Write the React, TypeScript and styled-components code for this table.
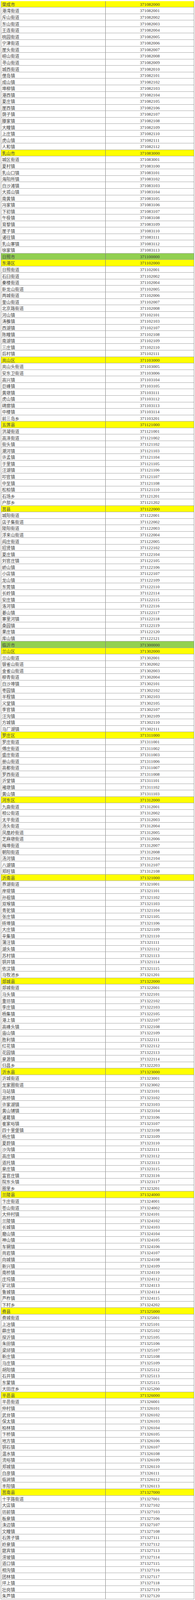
import React from 'react'
import styled, { createGlobalStyle } from 'styled-components'

type Level = 'city' | 'county' | 'town'

interface Place {
  name: string
  code: string
  level: Level
}

// name code, one per line, in the order of the sheet
const raw = `
荣成市 371082000
港湾街道 371082001
斥山街道 371082002
东山街道 371082003
王连街道 371082004
桃园街道 371082005
宁津街道 371082006
崖头街道 371082007
崂山街道 371082008
寻山街道 371082009
城西街道 371082010
俚岛镇 371082101
成山镇 371082102
埠柳镇 371082103
港西镇 371082104
夏庄镇 371082105
崖西镇 371082106
荫子镇 371082107
滕家镇 371082108
大疃镇 371082109
上庄镇 371082110
虎山镇 371082111
人和镇 371082112
乳山市 371083000
城区街道 371083001
夏村镇 371083100
乳山口镇 371083101
海阳所镇 371083102
白沙滩镇 371083103
大孤山镇 371083104
南黄镇 371083105
冯家镇 371083106
下初镇 371083107
午极镇 371083108
育黎镇 371083109
崖子镇 371083110
诸往镇 371083111
乳山寨镇 371083112
徐家镇 371083113
日照市 371100000
东港区 371102000
日照街道 371102001
石臼街道 371102002
秦楼街道 371102004
卧龙山街道 371102005
两城街道 371102006
奎山街道 371102007
北京路街道 371102008
河山镇 371102101
涛雒镇 371102103
西湖镇 371102107
陈疃镇 371102108
南湖镇 371102109
三庄镇 371102110
后村镇 371102111
岚山区 371103000
岚山头街道 371103005
安东卫街道 371103006
高兴镇 371103104
巨峰镇 371103105
黄墩镇 371103111
虎山镇 371103112
碑廓镇 371103113
中楼镇 371103114
前三岛乡 371103201
五莲县 371121000
洪凝街道 371121001
高泽街道 371121002
街头镇 371121102
潮河镇 371121103
许孟镇 371121104
于里镇 371121105
汪湖镇 371121106
叩官镇 371121107
中至镇 371121108
松柏镇 371121110
石场乡 371121201
户部乡 371121202
莒县 371122000
城阳街道 371122001
店子集街道 371122002
陵阳街道 371122003
浮来山街道 371122004
阎庄街道 371122005
招贤镇 371122102
夏庄镇 371122104
刘官庄镇 371122105
峤山镇 371122106
小店镇 371122107
龙山镇 371122109
东莞镇 371122110
长岭镇 371122114
安庄镇 371122115
洛河镇 371122116
碁山镇 371122117
寨里河镇 371122118
桑园镇 371122119
果庄镇 371122120
库山镇 371122121
临沂市 371300000
兰山区 371302000
兰山街道 371302001
银雀山街道 371302002
金雀山街道 371302003
柳青街道 371302004
白沙埠镇 371302101
枣园镇 371302102
半程镇 371302103
义堂镇 371302105
李官镇 371302107
汪沟镇 371302109
方城镇 371302110
马厂湖镇 371302111
罗庄区 371311000
罗庄街道 371311001
傅庄街道 371311002
盛庄街道 371311003
册山街道 371311006
高都街道 371311007
罗西街道 371311008
沂堂镇 371311101
褚墩镇 371311102
黄山镇 371311103
河东区 371312000
九曲街道 371312001
相公街道 371312002
太平街道 371312003
汤头街道 371312004
凤凰岭街道 371312005
芝麻墩街道 371312006
梅埠街道 371312007
朝阳街道 371312008
汤河镇 371312104
八湖镇 371312107
郑旺镇 371312108
沂南县 371321000
界湖街道 371321001
岸堤镇 371321101
孙祖镇 371321102
双堠镇 371321103
青驼镇 371321104
张庄镇 371321105
砖埠镇 371321106
大庄镇 371321109
辛集镇 371321110
蒲汪镇 371321111
湖头镇 371321112
苏村镇 371321113
铜井镇 371321114
依汶镇 371321115
马牧池乡 371321201
郯城县 371322000
郯城街道 371322001
马头镇 371322101
重坊镇 371322102
李庄镇 371322103
杨集镇 371322105
港上镇 371322107
高峰头镇 371322108
庙山镇 371322109
胜利镇 371322111
红花镇 371322112
花园镇 371322113
泉源镇 371322114
归昌乡 371322203
沂水县 371323000
沂城街道 371323001
龙家圈街道 371323002
马站镇 371323101
高桥镇 371323102
许家湖镇 371323103
黄山铺镇 371323104
诸葛镇 371323106
崔家峪镇 371323107
四十里堡镇 371323108
杨庄镇 371323109
夏蔚镇 371323110
沙沟镇 371323111
高庄镇 371323112
道托镇 371323113
泉庄镇 371323115
富官庄镇 371323116
院东头镇 371323117
圈里乡 371323201
兰陵县 371324000
卞庄街道 371324001
苍山街道 371324002
大仲村镇 371324101
兰陵镇 371324102
长城镇 371324103
磨山镇 371324104
神山镇 371324105
车辋镇 371324106
尚岩镇 371324107
向城镇 371324108
新兴镇 371324109
南桥镇 371324110
庄坞镇 371324112
矿坑镇 371324113
鲁城镇 371324114
芦柞镇 371324115
下村乡 371324202
费县 371325000
费城街道 371325001
上冶镇 371325101
薛庄镇 371325102
探沂镇 371325105
朱田镇 371325106
梁邱镇 371325107
新庄镇 371325108
马庄镇 371325109
胡阳镇 371325112
石井镇 371325113
东蒙镇 371325115
大田庄乡 371325200
平邑县 371326000
平邑街道 371326001
仲村镇 371326101
武台镇 371326102
保太镇 371326103
柏林镇 371326104
卞桥镇 371326105
地方镇 371326106
铜石镇 371326107
温水镇 371326108
流峪镇 371326109
郑城镇 371326110
白彦镇 371326111
临涧镇 371326112
丰阳镇 371326113
莒南县 371327000
十字路街道 371327001
大店镇 371327102
坊前镇 371327103
板泉镇 371327106
洙边镇 371327107
文疃镇 371327108
石莲子镇 371327111
岭泉镇 371327112
筵宾镇 371327113
涝坡镇 371327114
道口镇 371327115
相沟镇 371327116
团林镇 371327117
坪上镇 371327118
壮岗镇 371327119
朱芦镇 371327120
`

const places: Place[] = raw
  .trim()
  .split('\n')
  .map((line) => {
    const [name, code] = line.trim().split(' ')
    let level: Level = 'town'
    if (code.endsWith('00000')) level = 'city'
    else if (code.endsWith('000')) level = 'county'
    return { name, code, level }
  })

const fills: Record<Level, string> = {
  city: '#92d050',
  county: '#ffff00',
  town: '#ffffff',
}

const GlobalStyle = createGlobalStyle`
  html, body {
    margin: 0;
    padding: 0;
    background: #fff;
    overflow: hidden;
  }
`

// sizes are in vw/vh so the sheet keeps its proportions in the window
const Page = styled.div`
  width: 100vw;
  height: 100vh;
  padding: 0.065vh 0.4vw 0.04vh 0.4vw;
  box-sizing: border-box;
`

const Sheet = styled.div`
  display: flex;
  flex-direction: column;
  width: 100%;
  height: 100%;
  border-left: 1px solid #8c8c8c;
  border-right: 1px solid #8c8c8c;
  box-sizing: border-box;
`

const Row = styled.div<{ $level: Level }>`
  display: flex;
  flex: 1 1 0;
  min-height: 0;
  box-sizing: border-box;
  overflow: hidden;
  border-bottom: 1px solid #a3a3a3;
  background: ${(p) => fills[p.$level]};
`

const NameCell = styled.div`
  display: flex;
  align-items: center;
  flex: 0 0 54.3%;
  box-sizing: border-box;
  padding: 0.2vw 0 0 0.45vw;
  border-right: 1px solid #7a7a7a;
  font-family: 'Noto Sans CJK SC', 'Liberation Serif', serif;
  font-size: 2.2vw;
  line-height: 1.1;
  letter-spacing: 0.02vw;
  color: #444;
  white-space: nowrap;
`

const CodeCell = styled.div`
  display: flex;
  align-items: center;
  justify-content: center;
  flex: 1 1 auto;
  padding-top: 0.2vw;
  font-family: 'Liberation Serif', 'Times New Roman', serif;
  font-size: 2.2vw;
  line-height: 1.1;
  letter-spacing: 0.03vw;
  color: #333;
`

export default function App() {
  return (
    <>
      <GlobalStyle />
      <Page>
        <Sheet>
          {places.map((p, i) => (
            <Row key={i} $level={p.level}>
              <NameCell>{p.name}</NameCell>
              <CodeCell>{p.code}</CodeCell>
            </Row>
          ))}
        </Sheet>
      </Page>
    </>
  )
}
